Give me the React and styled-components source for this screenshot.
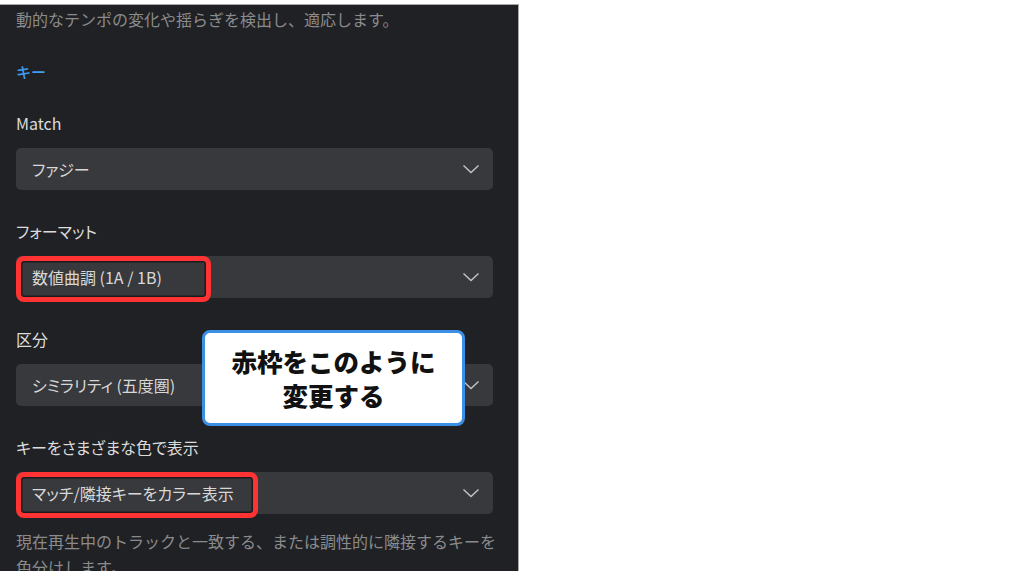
import React from "react";
import styled, { createGlobalStyle } from "styled-components";

const GlobalStyle = createGlobalStyle`
  html, body {
    margin: 0;
    padding: 0;
    background: #ffffff;
  }
  body {
    font-family: "Noto Sans CJK JP", "Noto Sans", sans-serif;
  }
`;

const Page = styled.div`
  width: 1024px;
  height: 576px;
  background: #ffffff;
  overflow: hidden;
`;

const Panel = styled.div`
  position: relative;
  width: 519px;
  height: 567px;
  margin-top: 4px;
  background: #202124;
  border-top: 1px solid #a8a8a8;
  border-right: 1px solid #a8a8a8;
  padding: 1px 25px 0 16px;
  box-sizing: border-box;
  overflow: hidden;
`;

const Desc = styled.p`
  margin: ${(p) => p.$top || 0}px 0 0;
  font-size: 16px;
  line-height: 26px;
  color: #8a8b8e;
  white-space: nowrap;
`;

const Heading = styled.div`
  margin: 28px 0 27px;
  font-size: 15px;
  font-weight: 500;
  line-height: 24px;
  color: #3f9df2;
`;

const Fields = styled.div`
  display: flex;
  flex-direction: column;
  gap: 29px;
`;

const Label = styled.div`
  font-size: 16px;
  line-height: 24px;
  color: #dcdcdc;
  margin-bottom: 13px;
  font-feature-settings: "palt";
`;

const Select = styled.div`
  position: relative;
  height: 42px;
  display: flex;
  align-items: center;
  justify-content: space-between;
  padding: 0 13px 0 16px;
  background: #38393c;
  border-radius: 5px;
  font-size: 16px;
  color: #d8d8d8;
  font-feature-settings: "palt";
`;

const Highlight = styled.div`
  position: absolute;
  left: 0;
  top: 0;
  width: ${(p) => p.$width}px;
  height: 46px;
  box-sizing: border-box;
  border: 5px solid #ff3333;
  border-radius: 8px;
  box-shadow: inset 0 0 0 1.5px #1b1b1c;
`;

const Value = styled.span`
  position: relative;
`;

const Callout = styled.div`
  position: absolute;
  left: 202px;
  top: 325px;
  width: 263px;
  height: 96px;
  box-sizing: border-box;
  background: #ffffff;
  border: 3px solid #3b8fe4;
  border-radius: 8px;
  display: flex;
  flex-direction: column;
  align-items: center;
  justify-content: center;
  font-size: 25.5px;
  font-weight: 900;
  line-height: 34px;
  color: #111111;
`;

const Chevron = () => (
  <svg width="18" height="10" viewBox="0 0 18 10" fill="none">
    <path d="M1.5 1.5 L9 8.5 L16.5 1.5" stroke="#c4c4c4" strokeWidth="1.4" />
  </svg>
);

const fields = [
  { label: "Match", value: "ファジー" },
  { label: "フォーマット", value: "数値曲調 (1A / 1B)", mark: 195 },
  { label: "区分", value: "シミラリティ (五度圏)" },
  { label: "キーをさまざまな色で表示", value: "マッチ/隣接キーをカラー表示", mark: 242 },
];

export default function App() {
  return (
    <Page>
      <GlobalStyle />
      <Panel>
        <Desc>動的なテンポの変化や揺らぎを検出し、適応します。</Desc>
        <Heading>キー</Heading>
        <Fields>
          {fields.map((f) => (
            <div key={f.label}>
              <Label>{f.label}</Label>
              <Select>
                {f.mark && <Highlight $width={f.mark} />}
                <Value>{f.value}</Value>
                <Chevron />
              </Select>
            </div>
          ))}
        </Fields>
        <Desc $top={14}>
          現在再生中のトラックと一致する、または調性的に隣接するキーを
          <br />
          色分けします。
        </Desc>
        <Callout>
          <span>赤枠をこのように</span>
          <span>変更する</span>
        </Callout>
      </Panel>
    </Page>
  );
}
